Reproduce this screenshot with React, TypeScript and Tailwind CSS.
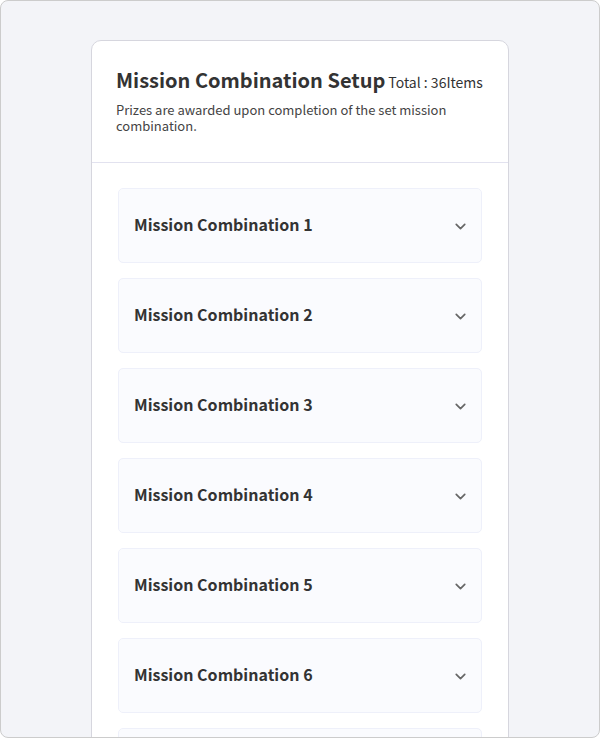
import { ChevronDown } from "lucide-react";

const combos = [1, 2, 3, 4, 5, 6, 7];

function ComboRow({ index }: { index: number }) {
  return (
    <div className="h-[75px] shrink-0 rounded-[5px] border border-[#eef0fa] bg-[#fafbfe] pl-[15px] pr-[12px] flex items-center justify-between">
      <span className="pb-[4px] text-[16px] font-bold text-[#333333]">Mission Combination {index}</span>
      <ChevronDown className="mt-[2px] w-[17px] h-[17px] text-[#666666]" strokeWidth={2.4} />
    </div>
  );
}

export default function App() {
  return (
    <div
      className="h-[738px] w-[600px] overflow-hidden rounded-[8px] border border-[#cccccc] bg-[#f3f4f8] pt-[39px]"
      style={{ fontFamily: '"Noto Sans CJK KR", "Noto Sans", sans-serif' }}
    >
      <div className="mx-auto w-[418px] rounded-t-[10px] border border-[#d6d6de] bg-white min-h-[800px]">
        <div className="px-[24px] pt-[24px] pb-[28px] border-b border-[#e2e2ef]">
          <div className="flex items-baseline gap-[3px]">
            <h1 className="text-[20px] font-bold text-[#333333] leading-[30px]">Mission Combination Setup</h1>
            <span className="text-[14px] text-[#333333]">Total : 36Items</span>
          </div>
          <p className="mt-[7px] text-[13px] leading-[16px] text-[#444444]">
            Prizes are awarded upon completion of the set mission combination.
          </p>
        </div>
        <div className="px-[26px] pt-[25px] flex flex-col gap-[15px]">
          {combos.map((n) => (
            <ComboRow key={n} index={n} />
          ))}
        </div>
      </div>
    </div>
  );
}
